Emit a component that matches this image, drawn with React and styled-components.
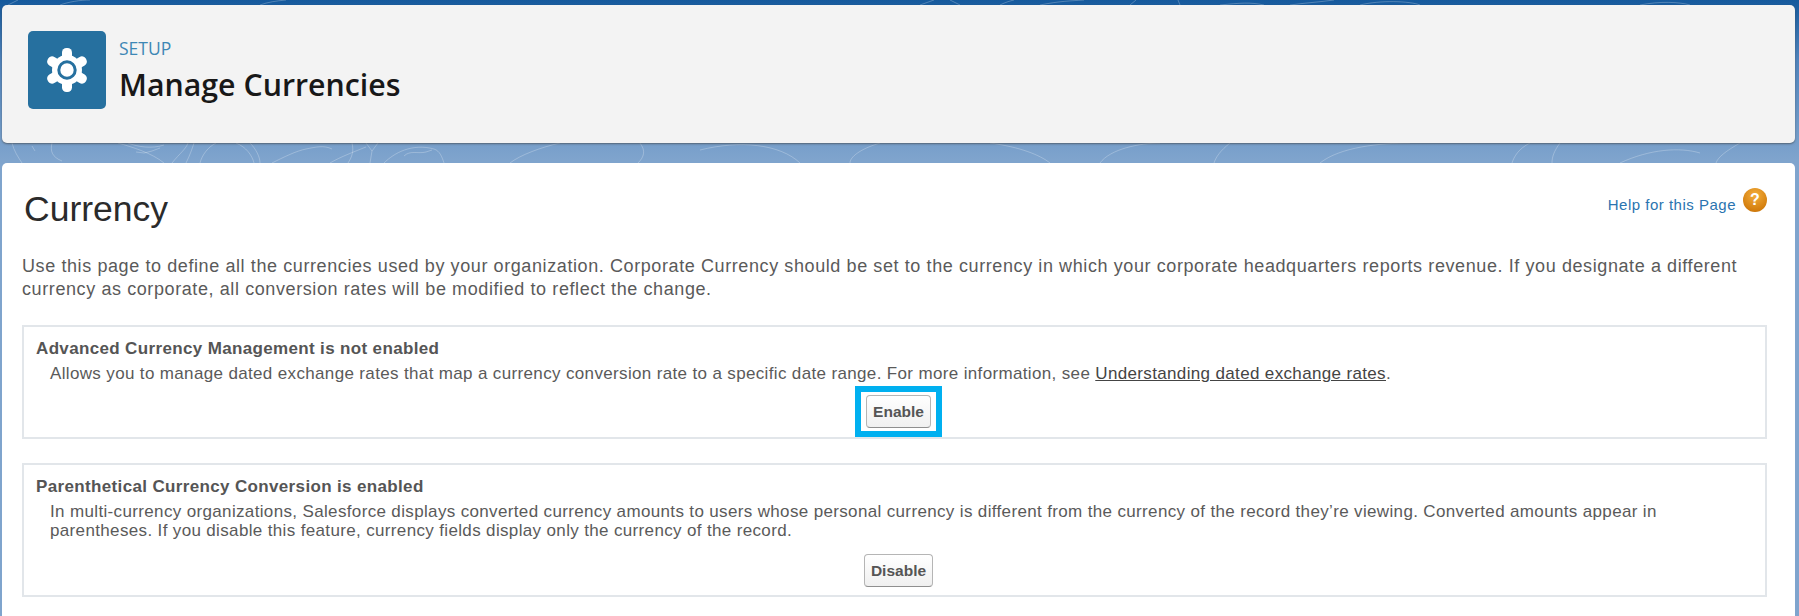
import styled, { createGlobalStyle } from "styled-components";

const GlobalStyle = createGlobalStyle`
  html, body {
    margin: 0;
    height: 616px;
    overflow: hidden;
    background: #fff;
  }
`;

const Page = styled.div`
  position: relative;
  width: 1799px;
  height: 616px;
  overflow: hidden;
  box-sizing: border-box;
  padding: 5px 4px 0 2px;
  background: linear-gradient(#15599c 0, #4f83bb 60px, #7fa4cd 160px);
  font-family: "Liberation Sans", Arial, sans-serif;
`;

const Contours = styled.svg`
  position: absolute;
  left: 0;
  top: 0;
`;

const Header = styled.header`
  position: relative;
  height: 138px;
  box-sizing: border-box;
  padding: 26px;
  display: flex;
  gap: 13px;
  background: #f3f3f3;
  border-radius: 5px;
  box-shadow: 0 1px 2px rgba(60, 60, 60, 0.6);
`;

const IconTile = styled.div`
  width: 78px;
  height: 78px;
  border-radius: 5px;
  background: #26709f;
  display: flex;
  align-items: center;
  justify-content: center;
`;

const HeaderText = styled.div`
  display: flex;
  flex-direction: column;
`;

const Eyebrow = styled.div`
  font-family: "Open Sans", sans-serif;
  font-size: 17.5px;
  line-height: 20px;
  margin-top: 7px;
  color: #3d87b5;
`;

const PageTitle = styled.h1`
  margin: 9px 0 0;
  font-family: "Open Sans", sans-serif;
  font-size: 30.3px;
  line-height: 36px;
  font-weight: 600;
  color: #181818;
`;

const Content = styled.main`
  position: relative;
  margin-top: 20px;
  height: 460px;
  box-sizing: border-box;
  padding: 23px 28px 0 20px;
  background: #fff;
  border-radius: 5px 5px 0 0;
`;

const TitleRow = styled.div`
  display: flex;
  justify-content: space-between;
  align-items: flex-start;
`;

const Title = styled.h2`
  margin: 0 0 0 2px;
  font-size: 35.5px;
  line-height: 46px;
  font-weight: 400;
  color: #2b2b2b;
`;

const HelpLink = styled.a`
  display: flex;
  align-items: flex-start;
  gap: 7px;
  margin-top: 2px;
  font-size: 15px;
  letter-spacing: 0.5px;
  line-height: 20px;
  color: #2a74b0;
  span {
    margin-top: 7px;
  }
`;

const HelpBadge = styled.div`
  width: 24px;
  height: 24px;
  border-radius: 50%;
  background: radial-gradient(circle at 50% 30%, #f4ae3c, #d27c0c 75%, #a8650e);
  color: #fff;
  font-size: 16px;
  line-height: 24px;
  font-weight: 700;
  letter-spacing: 0;
  text-align: center;
`;

const Intro = styled.p`
  margin: 23px 0 0;
  font-size: 18px;
  letter-spacing: 0.595px;
  line-height: 23px;
  color: #5a5a5a;
`;

const Section = styled.section`
  margin-top: ${(p) => p.$gap}px;
  height: ${(p) => p.$height}px;
  box-sizing: border-box;
  padding: 12px 12px 0;
  border: 2px solid #e2e6ea;
  display: flex;
  flex-direction: column;
`;

const SectionTitle = styled.h3`
  margin: 0;
  font-size: 17px;
  letter-spacing: 0.35px;
  line-height: 20px;
  font-weight: 700;
  color: #555;
`;

const SectionBody = styled.p`
  margin: 5px 0 0 14px;
  font-size: 17px;
  letter-spacing: 0.35px;
  line-height: 19px;
  color: #5a5a5a;
  a {
    color: #444;
    text-decoration: underline;
  }
`;

const Actions = styled.div`
  margin-top: ${(p) => p.$top}px;
  padding-left: 8px;
  display: flex;
  justify-content: center;
`;

const Highlight = styled.div`
  box-sizing: border-box;
  padding: 3px 5px;
  border: 6px solid #00b0f0;
`;

const Button = styled.button`
  box-sizing: border-box;
  height: 33px;
  width: ${(p) => p.$width}px;
  padding: 0;
  border: 1px solid #b5b5b5;
  border-bottom-color: #8f8f8f;
  border-radius: 4px;
  background: linear-gradient(#ffffff, #f0f0f0);
  font-family: "Liberation Sans", Arial, sans-serif;
  font-size: 15.5px;
  font-weight: 700;
  color: #555;
`;

const GearIcon = () => (
  <svg width="44" height="44" viewBox="-22 -22 44 44">
    <g fill="#fff">
      <rect x="-5" y="-22" width="10" height="44" rx="4.5" />
      <rect x="-5" y="-22" width="10" height="44" rx="4.5" transform="rotate(60)" />
      <rect x="-5" y="-22" width="10" height="44" rx="4.5" transform="rotate(120)" />
      <circle r="15" />
    </g>
    <circle r="8.2" fill="none" stroke="#26709f" strokeWidth="3" />
  </svg>
);

const App = () => {
  return (
    <Page>
      <GlobalStyle />
      <Contours width="1799" height="170" fill="none" stroke="#fff" strokeOpacity="0.25">
        <path d="M12 143c2 8 6 14 10 20M32 146l3 5M52 143c-2 8 0 14 10 18M118 143c14 4 34 10 46 20M128 143c10 4 24 6 36 2M136 152l8 1 8-2 8-3M172 163c8-10 14-14 16-20M186 163c4-8 6-14 8-20M200 163c2-8 8-16 16-20M236 143c10 4 16 12 18 20M250 143c6 6 10 14 10 20M272 163c12-6 24-12 34-14s18-4 26 0M330 163c10-6 26-12 36-16M352 143c2 8 0 14-4 20M366 143l6 8 6-8M372 151l-2 12M384 163c10-10 28-20 50-14 6 2 8 8 10 14M404 156c6-6 14-2 22-4l6-2M560 143c-18 4-40 12-50 20M640 143c6 8 4 14-2 20M700 150c40-10 80-6 100 13M880 143c-20 6-30 14-30 20M990 143c30 4 50 12 60 20M1100 163c10-14 40-20 60-20M1230 143c-10 8-14 14-16 20M1320 163c20-16 60-20 90-20M1530 143c-12 6-16 14-18 20M1560 143c-6 8-8 14-8 20M1620 163c30-14 60-16 80-10M1740 143c-14 8-22 14-24 20" />
        <path d="M8 5l10-5M60 5c8-3 20-5 30-5M260 5c8-3 16-4 26-5M920 5l14-5M960 5l-10-5M1000 5c6-3 10-4 14-5M1040 5c20-4 30-4 44-5M1130 5l6-5M1180 5l-2-5M1220 5c20-2 30-3 44 0M1290 5c14-2 30-3 44-5M1360 5c20-5 50-4 60 0M1640 5c20-4 40-3 50 0" />
      </Contours>
      <Header>
        <IconTile>
          <GearIcon />
        </IconTile>
        <HeaderText>
          <Eyebrow>SETUP</Eyebrow>
          <PageTitle>Manage Currencies</PageTitle>
        </HeaderText>
      </Header>
      <Content>
        <TitleRow>
          <Title>Currency</Title>
          <HelpLink>
            <span>Help for this Page</span>
            <HelpBadge>?</HelpBadge>
          </HelpLink>
        </TitleRow>
        <Intro>
          Use this page to define all the currencies used by your organization. Corporate Currency should be set to the currency in which your corporate headquarters reports revenue. If you designate a different currency as corporate, all conversion rates will be modified to reflect the change.
        </Intro>
        <Section $gap={24} $height={114}>
          <SectionTitle>Advanced Currency Management is not enabled</SectionTitle>
          <SectionBody>
            Allows you to manage dated exchange rates that map a currency conversion rate to a specific date range. For more information, see <a>Understanding dated exchange rates</a>.
          </SectionBody>
          <Actions $top={3}>
            <Highlight>
              <Button $width={65}>Enable</Button>
            </Highlight>
          </Actions>
        </Section>
        <Section $gap={24} $height={134}>
          <SectionTitle>Parenthetical Currency Conversion is enabled</SectionTitle>
          <SectionBody>
            In multi-currency organizations, Salesforce displays converted currency amounts to users whose personal currency is different from the currency of the record they’re viewing. Converted amounts appear in parentheses. If you disable this feature, currency fields display only the currency of the record.
          </SectionBody>
          <Actions $top={14}>
            <Button $width={69}>Disable</Button>
          </Actions>
        </Section>
      </Content>
    </Page>
  );
};

export default App;
